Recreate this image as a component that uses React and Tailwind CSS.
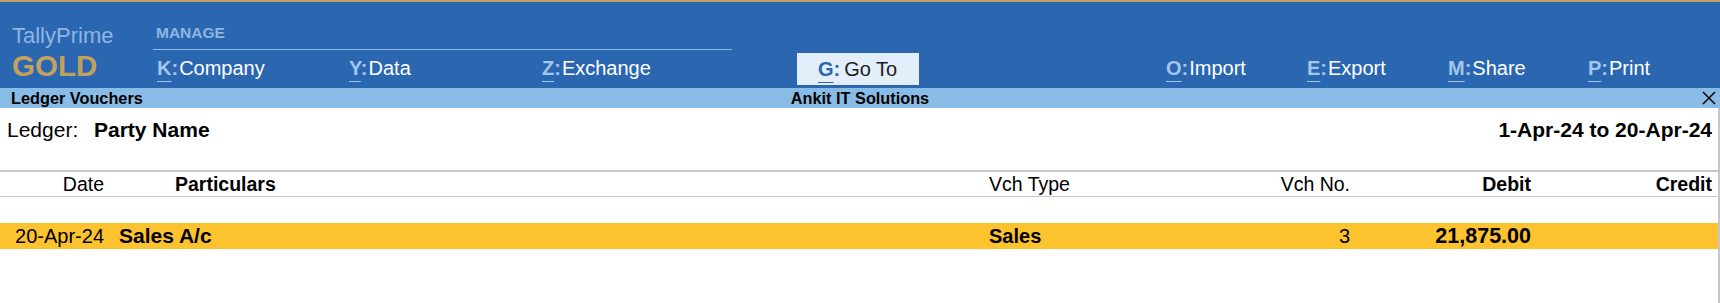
import React from 'react'

const font = { fontFamily: '"Liberation Sans", Arial, sans-serif' }

function MenuItem({ k, label, className = '' }) {
  return (
    <div className={`shrink-0 text-[20px] leading-[22px] whitespace-nowrap ${className}`}>
      <span className="font-bold text-[#a2c6ec] underline decoration-1 underline-offset-[6px]">{k}</span>
      <span className="font-bold text-[#a2c6ec] mr-[1px]">:</span>
      <span className="text-white">{label}</span>
    </div>
  )
}

export default function App() {
  return (
    <div style={font} className="w-[1720px] h-[303px] bg-white overflow-hidden text-black">
      {/* Barra superior */}
      <div className="border-t-2 border-[#bfa465] bg-[#2a67b0] h-[88px] flex items-start">
        {/* Logo */}
        <div className="w-[153px] shrink-0 pl-[12px] pt-[22px]">
          <div className="text-[22px] leading-[24px] text-[#8db6e3]">TallyPrime</div>
          <div className="mt-[2px] text-[29.5px] leading-[32px] font-bold text-[#c2a15f]">GOLD</div>
        </div>

        {/* Manage */}
        <div className="w-[579px] shrink-0 pt-[22px]">
          <div className="pl-[3px] pb-[7px] border-b border-[#8db8e8] text-[15.5px] leading-[18px] font-bold text-[#8db6e3]">
            MANAGE
          </div>
          <div className="mt-[7px] flex pl-[4px]">
            <MenuItem k="K" label="Company" className="w-[192px]" />
            <MenuItem k="Y" label="Data" className="w-[193px]" />
            <MenuItem k="Z" label="Exchange" className="w-[150px]" />
          </div>
        </div>

        {/* Go To */}
        <div className="ml-[65px] mt-[51px] w-[122px] h-[32px] shrink-0 bg-[#e2eef9] pl-[21px] flex items-center text-[20px] leading-[22px] whitespace-nowrap">
          <span className="font-bold text-[#2a67b0] underline decoration-1 underline-offset-[6px]">G</span>
          <span className="font-bold text-[#2a67b0] mr-[4px]">:</span>
          <span className="text-[#1c1c1c]">Go To</span>
        </div>

        {/* Ações */}
        <div className="ml-[247px] mt-[55px] flex">
          <MenuItem k="O" label="Import" className="w-[141px]" />
          <MenuItem k="E" label="Export" className="w-[141px]" />
          <MenuItem k="M" label="Share" className="w-[140px]" />
          <MenuItem k="P" label="Print" className="w-[100px]" />
        </div>
      </div>

      {/* Barra de título */}
      <div className="h-[20px] bg-[#88bce6] grid grid-cols-[1fr_auto_1fr] items-center text-[16.3px] leading-[20px] font-bold">
        <div className="pl-[11px]">Ledger Vouchers</div>
        <div>Ankit IT Solutions</div>
        <div className="flex justify-end pr-[4px]">
          <svg width="14" height="14" viewBox="0 0 14 14" fill="none" stroke="#000" strokeWidth="1.5">
            <path d="M1 1L13 13M13 1L1 13" />
          </svg>
        </div>
      </div>

      {/* Corpo */}
      <div className="h-[195px] border-r-2 border-[#c6c6c6]">
        <div className="h-[62px] pt-[10px] flex items-start text-[21px] leading-[24px]">
          <span className="pl-[7px] w-[94px]">Ledger:</span>
          <span className="font-bold">Party Name</span>
          <span className="ml-auto pr-[6px] font-bold text-[21px]">1-Apr-24 to 20-Apr-24</span>
        </div>

        {/* Cabeçalho da tabela */}
        <div className="border-t-2 border-b border-[#c8c8c8] h-[27px] grid grid-cols-[104px_885px_200px_161px_181px_181px] items-center text-[19.5px] leading-[24px]">
          <div className="text-right">Date</div>
          <div className="pl-[71px] font-bold">Particulars</div>
          <div>Vch Type</div>
          <div className="text-right">Vch No.</div>
          <div className="text-right font-bold">Debit</div>
          <div className="text-right font-bold">Credit</div>
        </div>

        {/* Linha */}
        <div className="mt-[26px] h-[26px] bg-[#fdc32f] grid grid-cols-[104px_885px_200px_161px_181px_181px] items-center text-[20px] leading-[26px]">
          <div className="text-right">20-Apr-24</div>
          <div className="pl-[15px] font-bold text-[21px]">Sales A/c</div>
          <div className="font-bold">Sales</div>
          <div className="text-right">3</div>
          <div className="text-right font-bold text-[21.5px]">21,875.00</div>
          <div className="text-right"></div>
        </div>
      </div>
    </div>
  )
}
